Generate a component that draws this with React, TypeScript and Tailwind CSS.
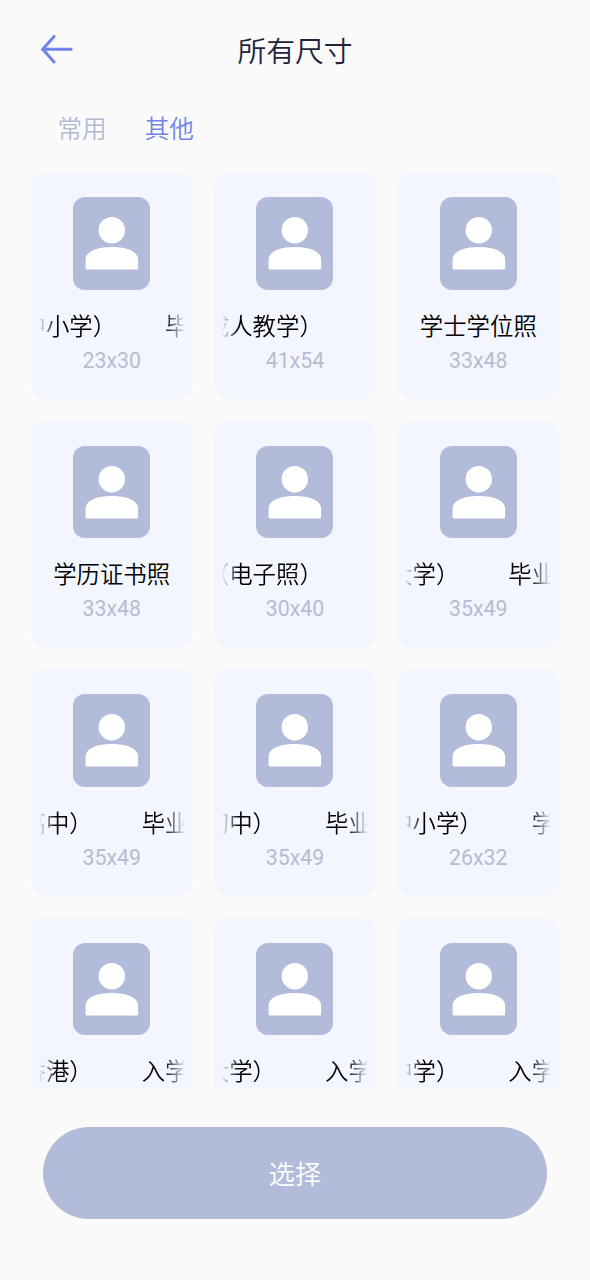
type Size = {
    tail: string;
    head?: string;
    size: string;
    scrolling?: boolean;
};

const tabs = ["常用", "其他"];

// tail is the end of the scrolling title, head is where it starts over
const sizes: Size[] = [
    { tail: "中小学）", head: "毕", size: "23x30", scrolling: true },
    { tail: "成人教学）", size: "41x54", scrolling: true },
    { tail: "学士学位照", size: "33x48" },
    { tail: "学历证书照", size: "33x48" },
    { tail: "（电子照）", size: "30x40", scrolling: true },
    { tail: "大学）", head: "毕业", size: "35x49", scrolling: true },
    { tail: "高中）", head: "毕业", size: "35x49", scrolling: true },
    { tail: "初中）", head: "毕业", size: "35x49", scrolling: true },
    { tail: "中小学）", head: "学", size: "26x32", scrolling: true },
    { tail: "香港）", head: "入学", size: "35x45", scrolling: true },
    { tail: "大学）", head: "入学", size: "35x45", scrolling: true },
    { tail: "中学）", head: "入学", size: "35x45", scrolling: true },
];

function BackArrow() {
    return (
        <svg className="mb-[2px]" width="34" height="30" viewBox="0 0 34 30" fill="none" stroke="#7083e6" strokeWidth="3" strokeLinecap="round" strokeLinejoin="round">
            <path d="M14 2.5 L2.8 15.2 L14 28" />
            <path d="M2.8 15.2 H31" />
        </svg>
    );
}

function Portrait() {
    return (
        <div className="w-[77px] h-[92.5px] shrink-0 rounded-[12px] bg-[#b2bbd9]">
            <svg width="77" height="92.5" viewBox="0 0 77 92.5" fill="#fff">
                <circle cx="38.8" cy="33.2" r="13.2" />
                <path d="M12.6 62.5 C12.6 54.5 24 50 38.8 50 C53.6 50 65.1 54.5 65.1 62.5 V71.3 Q65.1 72.6 63.8 72.6 H13.9 Q12.6 72.6 12.6 71.3 Z" />
            </svg>
        </div>
    );
}

function Marquee({ tail, head }: { tail: string; head?: string }) {
    return (
        <div className="w-full overflow-hidden [mask-image:linear-gradient(to_right,transparent,#000_17px,#000_calc(100%-21px),transparent)]">
            <div className="flex w-max gap-[49px] -ml-[16px]">
                <span>{tail}</span>
                {head && <span>{head}</span>}
            </div>
        </div>
    );
}

function SizeCard({ item }: { item: Size }) {
    return (
        <div className="h-[227px] rounded-[14px] bg-[#f3f6ff] px-2 pt-[25px] flex flex-col items-center">
            <Portrait />
            <div className="mt-[17px] w-full h-9 text-[23.4px] leading-9 text-black text-center whitespace-nowrap">
                {item.scrolling ? <Marquee tail={item.tail} head={item.head} /> : item.tail}
            </div>
            <p className="mt-[2px] font-['Roboto',sans-serif] font-normal text-[21.3px] leading-8 text-[#b6bcd2]">{item.size}</p>
        </div>
    );
}

function App() {
    return (
        <div className="w-[590px] h-[1280px] overflow-hidden bg-[#fafafa] flex flex-col font-['Noto_Sans_CJK_SC',sans-serif] font-[350]">
            <header className="h-[100px] shrink-0 px-10 grid grid-cols-[1fr_auto_1fr] items-center">
                <BackArrow />
                <h1 className="text-[28.8px] leading-10 text-[#1e253b] font-[350]">所有尺寸</h1>
            </header>
            <nav className="h-[72px] shrink-0 pl-[57.5px] pt-[9px] flex gap-[38px] text-[24.6px] leading-9">
                {tabs.map((tab) => (
                    <button key={tab} className={`h-9 ${tab === "其他" ? "text-[#7083e6]" : "text-[#b2b9d4]"}`}>
                        {tab}
                    </button>
                ))}
            </nav>
            <main className="h-[916px] shrink-0 overflow-hidden px-[30.5px]">
                <div className="grid grid-cols-3 gap-x-[21px] gap-y-[21.6px]">
                    {sizes.map((item, i) => (
                        <SizeCard key={i} item={item} />
                    ))}
                </div>
            </main>
            <footer className="px-[43px] pt-[39px]">
                <button className="w-full h-[91.5px] rounded-full bg-[#b2bbd9] text-white text-[26.3px]">选择</button>
            </footer>
        </div>
    );
}

export default App;
